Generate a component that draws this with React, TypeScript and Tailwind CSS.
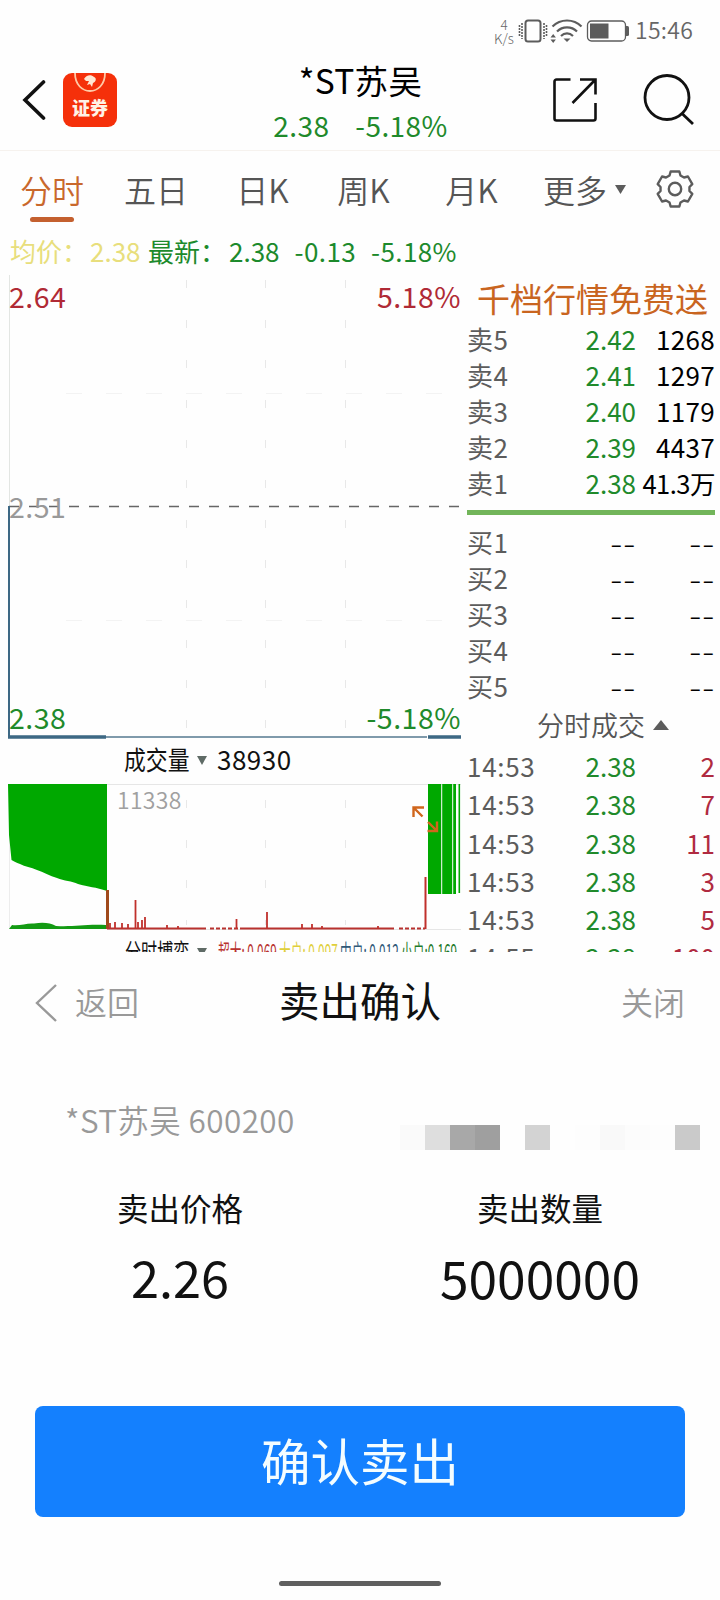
import React from 'react';

const sells = [
    ['卖5', '2.42', '1268'],
    ['卖4', '2.41', '1297'],
    ['卖3', '2.40', '1179'],
    ['卖2', '2.39', '4437'],
    ['卖1', '2.38', '41.3万'],
];

const buys = ['买1', '买2', '买3', '买4', '买5'];

const trades = [
    ['14:53', '2.38', '2'],
    ['14:53', '2.38', '7'],
    ['14:53', '2.38', '11'],
    ['14:53', '2.38', '3'],
    ['14:53', '2.38', '5'],
    ['14:55', '2.38', '100'],
];

const mosaic = [
    'bg-[#fafafa]', 'bg-[#dedede]', 'bg-[#a8a8a8]', 'bg-[#9f9f9f]', 'bg-transparent', 'bg-[#d3d3d3]',
    'bg-transparent', 'bg-[#fdfdfd]', 'bg-[#f9f9f9]', 'bg-[#fcfcfc]', 'bg-[#fdfdfd]', 'bg-[#cacaca]',
];

// [x, top] of the small volume spikes
const spikes = [
    [110, 923], [115, 922], [122, 923], [128, 924], [135.5, 900], [138, 922], [142, 920], [145, 917],
    [167, 925], [178, 926], [236.5, 919], [267, 912], [302, 924], [312, 924], [322, 926], [378, 926],
];

function Gear() {
    const points: string[] = [];
    for (let a = 0; a < 360; a += 60) {
        [[-22, 14.6], [-14, 18], [14, 18], [22, 14.6]].forEach(([d, r]) => {
            const t = ((a + d - 90) * Math.PI) / 180;
            points.push(`${(19 + r * Math.cos(t)).toFixed(2)},${(19 + r * Math.sin(t)).toFixed(2)}`);
        });
    }
    return (
        <svg width="38" height="38" viewBox="0 0 38 38" fill="none" stroke="#5c5c5c" strokeWidth="2.4" strokeLinejoin="round">
            <polygon points={points.join(' ')}/>
            <circle cx="19" cy="19" r="6.2"/>
        </svg>
    );
}

function StatusBar() {
    return (
        <div className="flex h-[61px] items-center pl-[494px] text-[#666]">
            <div className="w-5 text-center text-[13.5px] leading-[14px] font-light">
                <div>4</div>
                <div>K/s</div>
            </div>
            <svg className="ml-1" width="30" height="24" viewBox="0 0 30 24" fill="none" stroke="#5c5c5c">
                <rect x="7.5" y="1.5" width="15" height="21" rx="2.5" strokeWidth="2"/>
                <path d="M4 4v16M26 4v16" strokeWidth="1.6" strokeDasharray="2 1"/>
                <path d="M1.500 6v12M28.500 6v12" strokeWidth="1.6" strokeDasharray="2 1"/>
            </svg>
            <svg className="ml-[2px]" width="34" height="24" viewBox="0 0 34 24" fill="none" stroke="#5c5c5c" strokeWidth="2.2">
                <path d="M2.500 7.500C10.500 -.5 23.500 -.5 31.500 7.500"/>
                <path d="M7 12.500C12.500 7 21.500 7 27 12.500"/>
                <path d="M11 17C14.500 13.500 19.500 13.500 23 17"/>
                <path d="M13.500 19.500h7L17 23z" fill="#5c5c5c" stroke="none"/>
                <path d="M.5 18.500l2.700-3.500 2.700 3.500zM.5 20.500l2.700 3.500 2.700-3.500z" fill="#5c5c5c" stroke="none"/>
            </svg>
            <svg className="ml-[2px]" width="44" height="22" viewBox="0 0 44 22" fill="none">
                <rect x="1.500" y="1" width="38" height="20" rx="4" stroke="#5c5c5c" strokeWidth="1.300"/>
                <path d="M4 3.500H22.500V18.500H4z" fill="#5c5c5c"/>
                <path d="M40 6h1.500a1.500 1.500 0 0 1 1.500 1.500v7a1.500 1.500 0 0 1-1.500 1.500H40z" fill="#5c5c5c"/>
            </svg>
            <div className="-mt-[3px] ml-[5px] text-[23px] leading-[30px] font-[350] tracking-[0.3px]">15:46</div>
        </div>
    );
}

function Header() {
    return (
        <div className="flex h-[90px] justify-between border-b border-[#f6f2ee]">
            <div className="flex h-[78px] w-[200px] items-center pl-[22px]">
                <svg width="24" height="40" viewBox="0 0 24 40" fill="none" stroke="#111" strokeWidth="3.600" strokeLinecap="round">
                    <path d="M21.500 2L3 20l18.500 18"/>
                </svg>
                <div className="ml-[17px] flex h-[54px] w-[54px] flex-col items-center overflow-hidden rounded-[9px] bg-[#f5300a]">
                    <svg className="shrink-0" width="36" height="22" viewBox="0 0 36 22" fill="none">
                        <path d="M3 0C3 24 33 24 33 0" stroke="#ffc9a6" strokeWidth="1.800"/>
                        <path d="M12 6c2-4 7-5 10-2 3 1 2 5-1 6l-1 4-2-3-3 1 2-4-3 0z" fill="#ffe6d2"/>
                    </svg>
                    <div className="text-[18px] leading-[24px] font-black text-[#fff3e6]">证券</div>
                </div>
            </div>
            <div className="pl-px text-center">
                <div className="text-[33.5px] leading-[38px] tracking-[0.3px] text-black">*ST苏吴</div>
                <div className="flex justify-center gap-[26px] text-[28px] leading-[52px] tracking-[0.4px] text-[#1f8a2b]">
                    <span>2.38</span>
                    <span>-5.18%</span>
                </div>
            </div>
            <div className="flex h-[78px] w-[200px] items-center pl-[32px]">
                <svg width="46" height="46" viewBox="0 0 46 46" fill="none" stroke="#111" strokeWidth="2.600">
                    <path d="M18.500 2.500H4.500a2 2 0 0 0-2 2v37a2 2 0 0 0 2 2h37a2 2 0 0 0 2-2V26"/>
                    <path d="M28 2.500h15.500V17.500M43 3L20.500 26"/>
                </svg>
                <svg className="ml-[45px]" width="52" height="52" viewBox="0 0 52 52" fill="none" stroke="#111" strokeWidth="2.800">
                    <circle cx="24" cy="23.500" r="22"/>
                    <path d="M39 39.500l11 10.500"/>
                </svg>
            </div>
        </div>
    );
}

function Tabs() {
    return (
        <div className="grid h-[75px] grid-cols-[104px_104px_109px_93px_123px_1fr] pt-5 text-center text-[32px] leading-[36px] font-[350] text-[#555]">
            <div className="text-[#c9682c]">
                分时
                <div className="mx-auto mt-[10px] h-[5px] w-[44px] rounded-full bg-[#c4602f]"/>
            </div>
            <div>五日</div>
            <div>日K</div>
            <div>周K</div>
            <div>月K</div>
            <div className="flex h-[36px] items-center pl-[10px]">
                更多
                <svg className="ml-2" width="11" height="9" viewBox="0 0 11 9">
                    <path d="M0 0h11L5.500 9z" fill="#5c5c5c"/>
                </svg>
                <div className="ml-[30px]"><Gear/></div>
            </div>
        </div>
    );
}

function PriceChart() {
    return (
        <svg className="block" width="467" height="468" viewBox="0 275 467 468" fill="none">
            <path d="M9.500 275V506" stroke="#e3e6e3"/>
            <path d="M186.500 280V736M265.500 280V736M345.500 280V736" stroke="#e8e8e8" strokeDasharray="8 32"/>
            <path d="M66 393.500H461M66 620.500H461" stroke="#f3f3f3" strokeDasharray="16 24"/>
            <path d="M9 506.500H461" stroke="#666" strokeWidth="1.500" strokeDasharray="10 10"/>
            <path d="M9 506V737" stroke="#3d6884" strokeWidth="2"/>
            <path d="M106 737H427" stroke="#55788f" strokeWidth="1.500"/>
            <path d="M8 737H106M428 737H461" stroke="#3d6884" strokeWidth="3.500"/>
            <g fontSize="28.500" letterSpacing="0.5">
                <text x="9" y="308" fill="#b02a35">2.64</text>
                <text x="461" y="308" fill="#b02a35" textAnchor="end">5.18%</text>
                <text x="9" y="518" fill="#999">2.51</text>
                <text x="9" y="729" fill="#1f8a2b">2.38</text>
                <text x="461" y="729" fill="#1f8a2b" textAnchor="end">-5.18%</text>
            </g>
        </svg>
    );
}

function VolumeChart() {
    return (
        <svg className="block" width="467" height="158" viewBox="0 777 467 158" fill="none">
            <path d="M8 784.500H461M107 929.500H461" stroke="#e6e6e6"/>
            <path d="M9.500 785V929" stroke="#ededed"/>
            <path d="M186.500 800V925M265.500 800V925M345.500 800V925" stroke="#e8e8e8" strokeDasharray="8 32"/>
            <path d="M8 784H107V891C96 887 88 887 78 884C72 881 64 881 57 878C50 876 43 872 37 870C31 867 25 867 20 864C16 863 14 861 11.500 860L9 835z" fill="#00a800"/>
            <path d="M9 929l3-4C20 926 26 923 34 923.500C44 922 50 923 56 926C75 927 84 924 106 925V929z" fill="#139a13"/>
            <path d="M107.500 890V929" stroke="#a04a1c" strokeWidth="3"/>
            <path d="M107 928.500H206M240 928.500H394" stroke="#b8322f" strokeWidth="2"/>
            <path d="M210 928.500H240M399 928.500H425" stroke="#b8322f" strokeWidth="2" strokeDasharray="4 2"/>
            {spikes.map(([x, y]) => (
                <path key={x} d={`M${x} ${y}V929`} stroke="#c0302c" strokeWidth="1.800"/>
            ))}
            <path d="M425.500 877V929" stroke="#c0302c" strokeWidth="2"/>
            <path d="M428 784h13.200v110H428zM442.200 784h10v110h-10zM453.200 784h2.800v110h-2.800zM458.500 784h1.600v109h-1.600z" fill="#00a800"/>
            <path d="M413.500 817V807.500h10.500M413.500 807.500l9 9M427.500 831h9.500V821.500M428 822l9 9" stroke="#d0661c" strokeWidth="2.400"/>
            <text x="117" y="809" fontSize="23" letterSpacing="0.3" fontWeight="350" fill="#a0a0a0">11338</text>
        </svg>
    );
}

function FlowStat({label, value, color}: { label: string; value: string; color: string }) {
    return (
        <div className="w-[61px] whitespace-nowrap">
            <div className={`inline-block origin-left scale-x-[0.51] text-[23px] leading-[33px] ${color}`}>{label}{value}</div>
        </div>
    );
}

function Charts() {
    return (
        <div className="w-[467px] shrink-0">
            <PriceChart/>
            <div className="flex h-[34px] items-center pl-[124px] text-[26px] leading-[34px] text-[#111]">
                <div className="w-[73px]">
                    <div className="-mt-[2px] w-[78px] origin-left scale-x-[0.84]">成交量</div>
                </div>
                <svg width="10" height="9" viewBox="0 0 10 9"><path d="M0 0h10L5 9z" fill="#5f6b66"/></svg>
                <div className="-mt-[2px] ml-[10px] tracking-[0.5px]">38930</div>
            </div>
            <VolumeChart/>
            <div className="flex h-[31px] pl-[125px]">
                <div className="w-[72px]">
                    <div className="w-[96px] origin-left scale-x-[0.67] text-[24px] leading-[31px] text-[#111]">分时博弈</div>
                </div>
                <svg className="mt-[13px] mr-[11px]" width="10" height="9" viewBox="0 0 10 9"><path d="M0 0h10L5 9z" fill="#5f6b66"/></svg>
                <div className="flex w-[240px]">
                    <FlowStat label="超大: " value="0.069" color="text-[#b8322f]"/>
                    <FlowStat label="大户: " value="0.097" color="text-[#e0cf3a]"/>
                    <FlowStat label="中户: " value="0.012" color="text-[#2f5878]"/>
                    <FlowStat label="小户:" value="0.169" color="text-[#1f7a2b]"/>
                </div>
            </div>
        </div>
    );
}

function Dashes() {
    return <div className="origin-right scale-x-[1.4] text-[25px] font-[350] tracking-[0.6px] text-black">--</div>;
}

function OrderBook() {
    return (
        <div className="w-[248px] text-[26px]">
            <div className="pl-[10px] text-[33px] leading-[46px] whitespace-nowrap text-[#c9651f]">千档行情免费送</div>
            {sells.map(([name, price, count]) => (
                <div key={name} className="grid grid-cols-[60px_109px_79px] text-right leading-[36px] whitespace-nowrap">
                    <div className="text-left tracking-[0.6px] text-[#5c5c5c]">{name}</div>
                    <div className="text-[#1f8a2b]">{price}</div>
                    {count.endsWith('万')
                        ? <div className="-ml-2 text-[25.5px] tracking-[-0.5px] text-black">{count}</div>
                        : <div className="tracking-[0.3px] text-black">{count}</div>}
                </div>
            ))}
            <div className="my-[9px] h-[5px] bg-[#72b55a]"/>
            {buys.map((name) => (
                <div key={name} className="grid h-[36px] grid-cols-[60px_109px_79px] text-right leading-[36px]">
                    <div className="text-left tracking-[0.6px] text-[#5c5c5c]">{name}</div>
                    <Dashes/>
                    <Dashes/>
                </div>
            ))}
            <div className="mb-[2px] flex items-center pl-[70px] text-[27px] leading-[41px] font-[350] text-[#555]">
                分时成交
                <svg className="ml-2" width="16" height="10" viewBox="0 0 16 10"><path d="M8 0l8 10H0z" fill="#5c5c5c"/></svg>
            </div>
            {trades.map(([time, price, count], i) => (
                <div key={i} className="grid grid-cols-[80px_89px_79px] text-right leading-[38.3px]">
                    <div className="text-left tracking-[0.7px] text-[#5c5c5c]">{time}</div>
                    <div className="text-[#1f8a2b]">{price}</div>
                    <div className="text-[#b02a40]">{count}</div>
                </div>
            ))}
        </div>
    );
}

function SellConfirm() {
    return (
        <div className="text-[#111]">
            <div className="flex h-[97px] items-center justify-between pr-[35px] pl-[35px] text-[32px] text-[#999]">
                <div className="flex w-[150px] items-center">
                    <svg className="mt-1" width="22" height="38" viewBox="0 0 22 38" fill="none" stroke="#999" strokeWidth="2.400">
                        <path d="M21 1L2 19l19 18"/>
                    </svg>
                    <span className="ml-[18px] font-[350]">返回</span>
                </div>
                <div className="text-[40.5px] text-[#111]">卖出确认</div>
                <div className="w-[150px] text-right font-[350]">关闭</div>
            </div>

            <div className="mt-[50px] flex h-[51px] justify-between pr-[20px] pl-[65px]">
                <div className="text-[31.5px] leading-[40px] font-[350] tracking-[0.4px] text-[#999]">*ST苏吴 600200</div>
                <div className="mt-[26px] flex h-[25px]">
                    {mosaic.map((tone, i) => <div key={i} className={`w-[25px] ${tone}`}/>)}
                </div>
            </div>

            <div className="mt-9 grid grid-cols-2 text-center text-[31.5px] leading-[42px]">
                <div>
                    <div>卖出价格</div>
                    <div className="text-[50.5px] leading-[97px]">2.26</div>
                </div>
                <div>
                    <div>卖出数量</div>
                    <div className="text-[51.5px] leading-[97px]">5000000</div>
                </div>
            </div>

            <button className="mx-[35px] mt-[81px] block h-[111px] w-[650px] rounded-lg bg-[#1480fe] pb-[3px] text-[49.5px] leading-[60px] text-[#f4fdff]">
                确认卖出
            </button>
            <div className="mx-auto mt-[64px] h-[5px] w-[162px] rounded-full bg-[#5f5f5f]"/>
        </div>
    );
}

function App() {
    return (
        <div className="h-[1600px] w-[720px] overflow-hidden bg-[#fefefe] font-['Noto_Sans_CJK_SC',sans-serif]">
            <StatusBar/>
            <Header/>
            <Tabs/>
            <div className="flex h-[49px] items-center pl-[10px] text-[26px] whitespace-nowrap text-[#1c8a2c]">
                <span className="w-[80px] text-[#e8de7c]">均价：</span>
                <span className="w-[58px] text-[#e8de7c]">2.38</span>
                <span className="w-[81px]">最新：</span>
                <span>2.38</span>
                <span className="ml-[15px] tracking-[0.4px]">-0.13</span>
                <span className="ml-[15px] tracking-[0.4px]">-5.18%</span>
            </div>
            <div className="flex h-[677px] overflow-hidden">
                <Charts/>
                <OrderBook/>
            </div>
            <SellConfirm/>
        </div>
    );
}

export default App;
